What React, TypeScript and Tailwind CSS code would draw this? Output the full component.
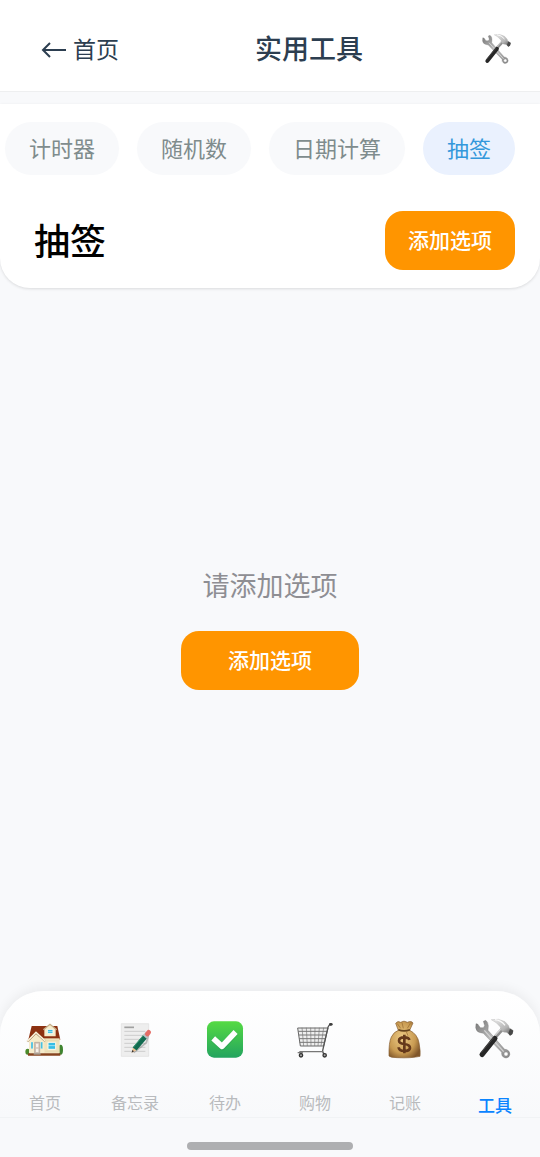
import { useState } from "react";
import type { ReactNode } from "react";

const tabs = ["计时器", "随机数", "日期计算", "抽签"];

function ToolsIcon({ className }: { className: string }) {
  return (
    <svg viewBox="342 120 120 120" className={className} aria-hidden="true">
      <defs>
        <linearGradient id="steel" x1="0" y1="0" x2="1" y2="1">
          <stop offset="0" stopColor="#777777" />
          <stop offset="0.5" stopColor="#c0c0c0" />
          <stop offset="1" stopColor="#858585" />
        </linearGradient>
        <linearGradient id="hammer" x1="0" y1="0" x2="1" y2="1">
          <stop offset="0" stopColor="#ededed" />
          <stop offset="0.6" stopColor="#b5b5b5" />
          <stop offset="1" stopColor="#4a4a4a" />
        </linearGradient>
      </defs>
      {/* wrench */}
      <path
        d="M345 131 L344 143 Q346 156 358 158 L367 160 L422 217 Q420 227 428 232 Q435 237 443 231 Q450 223 444 214 Q438 207 431 208 L381 151 L382 137 Q382 126 374 121 L367 124 L371 137 L367 143 L358 143 L350 132 Z"
        fill="url(#steel)"
        stroke="#707070"
        strokeWidth="1"
      />
      <path d="M370 151 L428 215" stroke="#d2d2d2" strokeWidth="4" />
      <circle cx="435" cy="222" r="6" fill="#ffffff" stroke="#808080" strokeWidth="1" />
      {/* hammer */}
      <path d="M428 143 L402 172" stroke="#8f8f8f" strokeWidth="11" />
      <path d="M424 142 L400 169" stroke="#d6d6d6" strokeWidth="4" />
      <path d="M402 175 L363 224" stroke="#272727" strokeWidth="15" strokeLinecap="round" />
      <path d="M397 174 L361 217" stroke="#5f5f5f" strokeWidth="2" strokeLinecap="round" />
      <path
        d="M391 119 Q414 114 432 125 L443 137 Q443 145 449 146 L456 151 L454 161 L447 166 L441 160 Q437 156 431 157 Q424 157 420 150 L418 141 Q408 127 391 119 Z"
        fill="url(#hammer)"
        stroke="#a0a0a0"
        strokeWidth="1"
      />
      <path d="M447 146 L457 152 L454 163 L447 167 L442 160 Z" fill="#484848" />
      <path d="M402 119 Q420 121 432 136" stroke="#fafafa" strokeWidth="4" fill="none" />
    </svg>
  );
}

function HouseIcon() {
  return (
    <svg viewBox="12 15 120 120" className="size-10" aria-hidden="true">
      <ellipse cx="20" cy="110" rx="7" ry="9" fill="#4c8a2c" />
      <ellipse cx="119" cy="104" rx="7" ry="15" fill="#3f8430" />
      <path d="M32 33 H109 L118 74 H22 Z" fill="#8c3111" />
      <path d="M68 70 H116 V115 H68 Z" fill="#efe3bd" />
      <path d="M24 78 L45 56 L70 78 V115 H24 Z" fill="#f5ebca" />
      <path d="M19 80 L45 53 L73 79" fill="none" stroke="#b29b79" strokeWidth="6" />
      <path d="M19 79 L45 52 L73 78" fill="none" stroke="#fff6df" strokeWidth="4" />
      <path d="M70 64 V43 L87 28 L104 43 V64 Z" fill="#f5ebca" />
      <path d="M67 44 L87 28 L107 44" fill="none" stroke="#c4ad8a" strokeWidth="4" />
      <path d="M72 77 H115 M72 109 H115" stroke="#dccfa8" strokeWidth="1" />
      <path d="M79 43 H96 V56 H79 Z M81 82 H104 V103 H81 Z" fill="#36bde5" stroke="#fff9e9" strokeWidth="3" />
      <path d="M79 50 H96 M81 92 H104" stroke="#d5f4f7" strokeWidth="2" />
      <path d="M30 81 H36 V101 H30 Z M59 81 H65 V101 H59 Z" fill="#3bbde2" stroke="#fff9e9" strokeWidth="1" />
      <path d="M41 82 H56 V115 H41 Z" fill="#d4c6ba" stroke="#a99d91" strokeWidth="2" />
      <path d="M45 86 H52 V97 H45 Z M45 101 H52 V111 H45 Z" fill="#f5f1eb" />
      <path d="M21 115 H118 V122 H21 Z" fill="#87451f" />
      <path d="M38 114 H59 V119 H38 Z" fill="#aaa094" />
    </svg>
  );
}

function MemoIcon() {
  return (
    <svg viewBox="-3 15 120 120" className="size-10" aria-hidden="true">
      <path d="M16 26 H98 V124 H16 Z" fill="#eeeeee" stroke="#dedede" strokeWidth="2" />
      <path d="M25 37 H54" stroke="#a0a0a0" strokeWidth="5" />
      <path d="M25 49 H88 M25 61 H88 M25 73 H88 M25 85 H88 M25 97 H88 M25 109 H88" stroke="#bbbbbb" strokeWidth="2" />
      <path d="M53 113 L91 83 L97 62" stroke="#777777" strokeWidth="5" opacity="0.45" fill="none" />
      <path d="M47 113 L51 97 L61 106 Z" fill="#efc08f" />
      <path d="M47 113 L49 105 L54 109 Z" fill="#303030" />
      <path d="M56 102 L88 64" stroke="#126b50" strokeWidth="15" />
      <path d="M52 97 L83 60" stroke="#3d9874" strokeWidth="3" />
      <path d="M86 66 L94 57" stroke="#b9bfc2" strokeWidth="15" />
      <path d="M94 57 L98 52" stroke="#e46d66" strokeWidth="14" strokeLinecap="round" />
    </svg>
  );
}

function CheckIcon() {
  return (
    <svg viewBox="72 120 120 120" className="size-10" aria-hidden="true">
      <defs>
        <linearGradient id="green" x1="0" y1="0" x2="0" y2="1">
          <stop offset="0" stopColor="#55da43" />
          <stop offset="1" stopColor="#23a45f" />
        </linearGradient>
      </defs>
      <rect x="78" y="124" width="108" height="109" rx="21" fill="url(#green)" />
      <path d="M103 183 L123 202 L159 164" fill="none" stroke="#218d4a" strokeWidth="18" strokeLinecap="square" strokeLinejoin="round" opacity="0.35" />
      <path d="M103 181 L123 199 L158 162" fill="none" stroke="#ffffff" strokeWidth="17" strokeLinecap="square" strokeLinejoin="round" />
    </svg>
  );
}

function CartIcon() {
  return (
    <svg viewBox="12 15 120 120" className="size-10" aria-hidden="true">
      <path d="M20 39 H111 L98 93 H28 Z" fill="#eeeeee" stroke="#666666" strokeWidth="3" />
      <path d="M21 49 H109 M23 60 H106 M24 71 H104 M26 82 H101" stroke="#777777" strokeWidth="3" />
      <path d="M33 38 L38 93 M46 38 L49 93 M59 38 L60 93 M72 38 L71 93 M85 38 L81 93 M98 38 L90 93" stroke="#777777" strokeWidth="2" />
      <path d="M120 29 Q114 28 111 37 L95 107 Q94 113 101 118" fill="none" stroke="#555555" strokeWidth="4" />
      <path d="M118 28 H121" stroke="#3e3e3e" strokeWidth="8" strokeLinecap="round" />
      <path d="M96 110 H25 M20 113 H33 L28 120" fill="none" stroke="#777777" strokeWidth="4" />
      <circle cx="30" cy="121" r="5" fill="#aaaaaa" stroke="#343434" strokeWidth="4" />
      <circle cx="101" cy="121" r="5" fill="#aaaaaa" stroke="#343434" strokeWidth="4" />
    </svg>
  );
}

function MoneyIcon() {
  return (
    <svg viewBox="72 120 120 120" className="size-10" aria-hidden="true">
      <defs>
        <radialGradient id="bag" cx="0.42" cy="0.45" r="0.65">
          <stop offset="0" stopColor="#edcb86" />
          <stop offset="0.65" stopColor="#c99b52" />
          <stop offset="1" stopColor="#80562a" />
        </radialGradient>
      </defs>
      <path
        d="M112 151 L104 130 Q110 121 119 127 Q129 120 139 127 Q151 121 156 129 L146 151 Q169 162 174 188 Q179 214 177 229 Q150 235 109 233 Q88 233 84 228 Q83 187 91 171 Q98 156 112 151 Z"
        fill="url(#bag)"
        stroke="#855c30"
        strokeWidth="2"
      />
      <path d="M112 149 Q129 156 147 149" fill="none" stroke="#65441f" strokeWidth="5" />
      <path d="M109 131 L119 145 M123 128 L127 145 M148 130 L139 145 M135 153 L141 167" stroke="#94662f" strokeWidth="2" />
      <path d="M145 180 Q144 172 130 172 Q114 172 114 182 Q114 190 130 192 Q147 194 147 204 Q146 213 130 213 Q113 213 113 202 M130 164 V220" fill="none" stroke="#65391b" strokeWidth="8" />
    </svg>
  );
}

const navItems: { label: string; icon: ReactNode }[] = [
  { label: "首页", icon: <HouseIcon /> },
  { label: "备忘录", icon: <MemoIcon /> },
  { label: "待办", icon: <CheckIcon /> },
  { label: "购物", icon: <CartIcon /> },
  { label: "记账", icon: <MoneyIcon /> },
  { label: "工具", icon: <ToolsIcon className="size-10 overflow-visible" /> },
];

export default function App() {
  const [activeTab, setActiveTab] = useState("抽签");

  return (
    <div className="flex min-h-screen flex-col overflow-x-hidden bg-[#f8f9fb] font-['Noto_Sans_CJK_SC',sans-serif]">

      {/* Header */}
      <header className="flex h-[92px] items-center justify-between border-b border-[#eeeff0] bg-white pt-2 pr-7 pl-6 text-[#2c3e50]">
        <a href="#home" className="flex items-center gap-[7px] px-[17px] text-[23px] leading-8">
          <svg viewBox="0 0 25 18" className="h-[18px] w-[25px]" fill="none" stroke="currentColor" strokeWidth="2" aria-hidden="true">
            <path d="M25 9 H2 M9 2 L2 9 L9 16" />
          </svg>
          <span className="pb-1">首页</span>
        </a>
        <h1 className="pb-1 text-[27px] leading-8 font-medium">实用工具</h1>
        <ToolsIcon className="size-[30px] overflow-visible" />
      </header>

      {/* Tabs and title */}
      <section className="mt-3 rounded-b-[30px] bg-white py-[18px] shadow-[0_1px_3px_rgba(0,0,0,0.12)]">
        <div className="flex justify-end gap-[18px] pr-[25px]">
          {tabs.map((tab) => (
            <button
              key={tab}
              onClick={() => setActiveTab(tab)}
              className={`h-[53px] shrink-0 rounded-full px-6 pb-1 text-[22px] leading-8 ${
                tab === activeTab ? "bg-[#eaf1fe] text-[#3498db]" : "bg-[#f8f9fb] text-[#7f8c8d]"
              }`}
            >
              {tab}
            </button>
          ))}
        </div>

        <div className="mt-9 flex items-center justify-between pr-[25px] pl-[34px]">
          <h2 className="pb-1 text-4xl leading-[48px] font-medium text-black">{activeTab}</h2>
          <button className="h-[59px] rounded-[18px] bg-[#ff9500] px-[23px] pb-1 text-[21px] leading-8 font-medium text-white">
            添加选项
          </button>
        </div>
      </section>

      {/* Empty state */}
      <main className="flex flex-1 flex-col items-center justify-center gap-[30px] pb-5">
        <p className="text-[27px] leading-8 text-[#8e8e93]">请添加选项</p>
        <button className="h-[59px] rounded-[18px] bg-[#ff9500] px-[47px] pb-1 text-[21px] leading-8 font-medium text-white">
          添加选项
        </button>
      </main>

      {/* Bottom navigation */}
      <nav className="grid h-[127px] grid-cols-6 rounded-t-[44px] border-b border-[#f1f3f5] bg-linear-to-b from-white to-[#f8f9fb] pt-[29px] shadow-[0_-3px_12px_rgba(0,0,0,0.06)]">
        {navItems.map((item) => {
          const active = item.label === "工具";

          return (
            <a
              key={item.label}
              href={`#${item.label}`}
              className="flex flex-col items-center"
            >
              {item.icon}
              <span
                className={
                  active
                    ? "mt-[33px] text-[17px] leading-6 font-medium text-[#0a84ff]"
                    : "mt-[30px] text-base leading-6 text-[#b8babd]"
                }
              >
                {item.label}
              </span>
            </a>
          );
        })}
      </nav>

      {/* Home indicator */}
      <div className="flex h-[39px] justify-center bg-[#f8f9fb] pt-6">
        <div className="h-2 w-[166px] rounded-full bg-[#aeafb1]" />
      </div>

    </div>
  );
}
